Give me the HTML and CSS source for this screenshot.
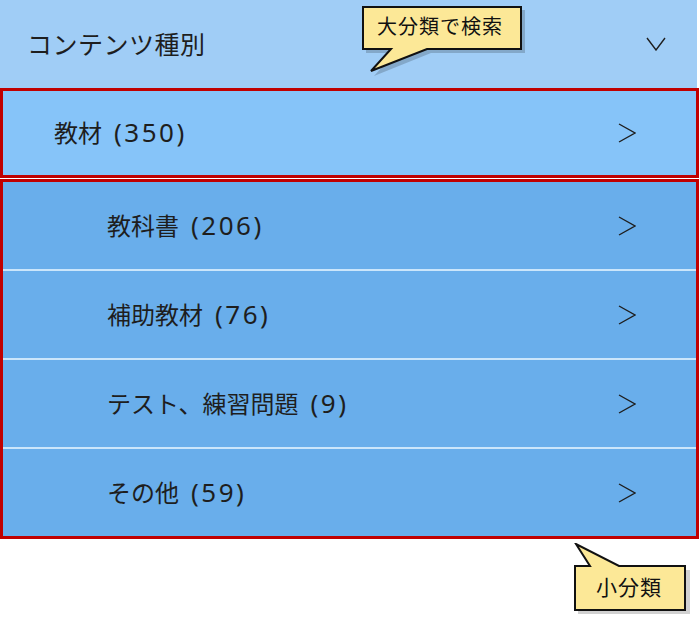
FILE: index.html
```html
<!DOCTYPE html>
<html lang="ja">

<head>
    <meta charset="UTF-8">
    <title>コンテンツ種別</title>
    <link rel="stylesheet" href="styles.css">
</head>

<body>
    <div class="panel">
        <div class="header">
            <span class="label">コンテンツ種別</span>
            <svg class="chevron-down" width="20" height="14" viewBox="0 0 20 14">
                <polyline points="1,1 10,13 19,1" />
            </svg>
        </div>

        <div class="group major">
            <div class="row">
                <span class="label">教材<span class="count">(350)</span></span>
                <svg class="chevron" width="18" height="20" viewBox="0 0 18 20">
                    <polyline points="1,1 17,10 1,19" />
                </svg>
            </div>
        </div>

        <div class="group minor">
            <div class="row">
                <span class="label">教科書<span class="count">(206)</span></span>
                <svg class="chevron" width="18" height="20" viewBox="0 0 18 20">
                    <polyline points="1,1 17,10 1,19" />
                </svg>
            </div>
            <div class="row">
                <span class="label">補助教材<span class="count">(76)</span></span>
                <svg class="chevron" width="18" height="20" viewBox="0 0 18 20">
                    <polyline points="1,1 17,10 1,19" />
                </svg>
            </div>
            <div class="row">
                <span class="label">テスト、練習問題<span class="count">(9)</span></span>
                <svg class="chevron" width="18" height="20" viewBox="0 0 18 20">
                    <polyline points="1,1 17,10 1,19" />
                </svg>
            </div>
            <div class="row">
                <span class="label">その他<span class="count">(59)</span></span>
                <svg class="chevron" width="18" height="20" viewBox="0 0 18 20">
                    <polyline points="1,1 17,10 1,19" />
                </svg>
            </div>
        </div>

        <!-- callouts -->
        <div class="callout callout-top">
            <svg class="bubble" width="170" height="80" viewBox="0 0 170 80">
                <path class="shadow" d="M5,5 H164 V48 H70 L13,71 L34,48 H5 Z" />
                <path class="shape" d="M2,2 H160 V44 H66 L10,66 L30,44 H2 Z" />
            </svg>
            <span class="callout-text">大分類で検索</span>
        </div>

        <div class="callout callout-bottom">
            <svg class="bubble" width="122" height="80" viewBox="0 0 122 80">
                <path class="shadow" d="M5,27 H117 V71 H5 Z" />
                <path class="shape" d="M2,23 H17 L3,1 L46,23 H112 V67 H2 Z" />
            </svg>
            <span class="callout-text">小分類</span>
        </div>
    </div>
</body>

</html>
```

FILE: styles.css
```css
body {
    margin: 0;
    padding: 0;
    background: #fff;
    font-family: "Noto Sans", "Noto Sans CJK JP", sans-serif;
    color: #1e1e1e;
}

.panel {
    position: relative;
    width: 700px;
    height: 624px;
}

.header {
    width: 697px;
    height: 88px;
    background-color: #a0cdf6;
    display: flex;
    align-items: center;
    justify-content: space-between;
    box-sizing: border-box;
    padding: 0 31px 0 27px;
}

.header .label {
    font-size: 25px;
    letter-spacing: 0.5px;
    margin-top: -2px;
}

.chevron-down,
.chevron {
    fill: none;
    stroke: #1e1e1e;
    stroke-width: 1.4;
}

.chevron-down {
    margin-top: -1px;
}

.group {
    width: 699px;
    box-sizing: border-box;
    border: 3px solid #c00000;
}

.major {
    height: 90px;
    background-color: #86c4f9;
}

.minor {
    margin-top: 1px;
    background-color: #69aeeb;
}

.row {
    height: 87px;
    display: flex;
    align-items: center;
    justify-content: space-between;
    padding: 0 60px 0 104px;
}

.major .row {
    height: 84px;
    padding-left: 51px;
}

.minor .row + .row {
    border-top: 2px solid #cbe6fb;
}

.row .label {
    font-size: 24px;
    margin-top: -2px;
}

.count {
    margin-left: 12px;
    font-size: 26px;
    letter-spacing: 2.5px;
}

.callout {
    position: absolute;
    z-index: 5;
}

.callout-top {
    left: 361px;
    top: 5px;
}

.callout-bottom {
    left: 573px;
    top: 543px;
}

.bubble {
    display: block;
}

.bubble .shadow {
    fill: rgba(0, 0, 0, 0.18);
    stroke: none;
}

.bubble .shape {
    fill: #fce897;
    stroke: #111;
    stroke-width: 2;
    stroke-linejoin: miter;
}

.callout-text {
    position: absolute;
    font-size: 20px;
    letter-spacing: 1px;
    color: #111;
    white-space: nowrap;
}

.callout-top .callout-text {
    left: 16px;
    top: 6px;
}

.callout-bottom .callout-text {
    left: 23px;
    top: 28px;
    font-size: 21px;
}
```
